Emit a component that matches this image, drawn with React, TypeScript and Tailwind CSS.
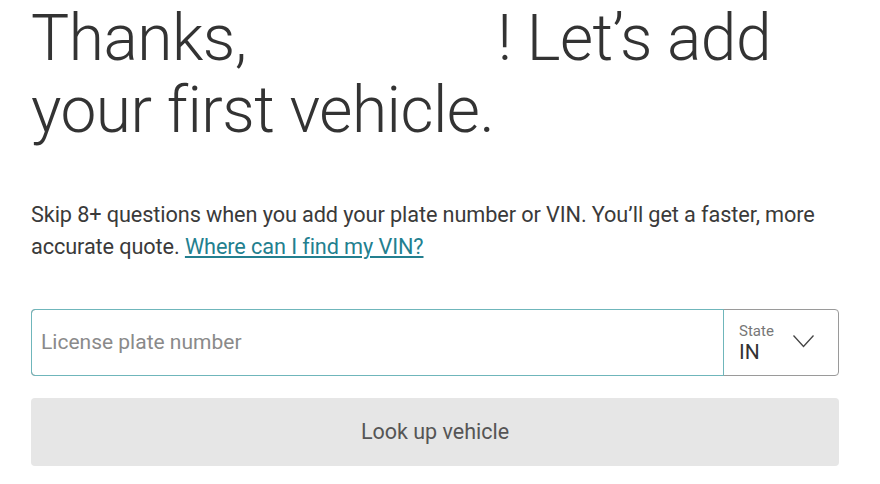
const App = () => {
  return (
    <div className="min-h-[484px] w-[880px] bg-white font-['Roboto',sans-serif] text-[#333]">
      <div className="flex w-[852px] flex-col pl-[31px] pt-[3px]">
        <h1 className="text-[64px] font-light leading-[72px] tracking-[-0.5px] text-[#333]">
          Thanks, <span className="inline-block w-[236px]"></span>! Let’s add
          <br />
          your first vehicle.
        </h1>
        <p className="mt-[52px] text-[21.7px] leading-[32px] tracking-[-0.1px] text-[#3a3a3a]">
          Skip 8+ questions when you add your plate number or VIN. You’ll get a
          faster, more accurate quote.{" "}
          <a href="#" className="text-[#237f8f] underline underline-offset-2">
            Where can I find my VIN?
          </a>
        </p>
        <div className="mt-[46px] flex h-[67px] w-[808px] rounded-[4px] border border-[#9a9a9a]">
          <div className="-m-px flex flex-1 items-center rounded-l-[4px] border border-[#6fb6bb] pl-[9px]">
            <span className="text-[21px] text-[#8a8a8a]">License plate number</span>
          </div>
          <div className="flex w-[115px] items-center justify-between pl-[16px] pr-[24px]">
            <div className="flex flex-col">
              <span className="text-[15px] leading-[18px] text-[#777]">State</span>
              <span className="text-[21px] leading-[24px] text-[#333]">IN</span>
            </div>
            <svg width="21" height="13" viewBox="0 0 21 13" className="mt-[-2px]">
              <polyline points="0.5,0.5 10.5,11.5 20.5,0.5" fill="none" stroke="#444" strokeWidth="1.3" />
            </svg>
          </div>
        </div>
        <button className="mt-[22px] h-[68px] w-[808px] rounded-[4px] bg-[#e6e6e6] text-[21.5px] text-[#555]">
          Look up vehicle
        </button>
      </div>
    </div>
  );
};

export default App;
